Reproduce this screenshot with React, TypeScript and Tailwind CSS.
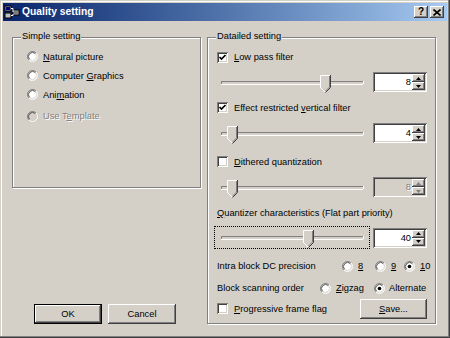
import React from "react"

const raised =
  "shadow-[inset_-1px_-1px_0_#404040,inset_1px_1px_0_#ffffff,inset_-2px_-2px_0_#808080]"
const sunken =
  "shadow-[inset_1px_1px_0_#808080,inset_-1px_-1px_0_#ffffff,inset_2px_2px_0_#404040,inset_-2px_-2px_0_#d4d0c8]"

function Radio({ checked = false, disabled = false }: { checked?: boolean; disabled?: boolean }) {
  return (
    <svg width="11" height="11" viewBox="0 0 12 12" className="shrink-0">
      <circle cx="6" cy="6" r="5" fill={disabled ? "#d4d0c8" : "#ffffff"} />
      <path d="M2.11 9.89 A5.5 5.5 0 0 1 9.89 2.11" stroke="#808080" fill="none" />
      <path d="M2.82 9.18 A4.5 4.5 0 0 1 9.18 2.82" stroke="#404040" fill="none" />
      <path d="M9.89 2.11 A5.5 5.5 0 0 1 2.11 9.89" stroke="#ffffff" fill="none" />
      <path d="M9.18 2.82 A4.5 4.5 0 0 1 2.82 9.18" stroke="#d4d0c8" fill="none" />
      {checked && <circle cx="6" cy="6" r="2" fill="#000000" />}
    </svg>
  )
}

function Check({ checked = false }: { checked?: boolean }) {
  return (
    <div className={`w-[11px] h-[11px] bg-white shrink-0 relative ${sunken}`}>
      {checked && (
        <svg width="11" height="11" viewBox="0 0 11 11" className="absolute inset-0">
          <path d="M2.5 5 L4.5 7 L8.5 3" stroke="#000000" strokeWidth="1.7" fill="none" />
        </svg>
      )}
    </div>
  )
}

function Slider({ thumb, focused = false }: { thumb: number; focused?: boolean }) {
  return (
    <div
      className={`relative w-[156px] h-[23px] shrink-0 border border-dotted ${
        focused ? "border-black" : "border-transparent"
      }`}
    >
      <div className="absolute left-[6px] right-[6px] top-[9px] h-[3px] bg-[#d4d0c8] border-t border-l border-[#808080] shadow-[0_1px_0_#ffffff,1px_0_0_#ffffff]" />
      <svg
        width="11"
        height="18"
        viewBox="0 0 11 18"
        className="absolute top-[3px]"
        style={{ left: thumb }}
      >
        <path d="M0.5 0.5 H10.5 V12.5 L5.5 17.5 L0.5 12.5 Z" fill="#d4d0c8" />
        <path d="M0.5 13 V0.5 H10" stroke="#ffffff" fill="none" />
        <path d="M0.5 12.5 L5 17" stroke="#ffffff" fill="none" />
        <path d="M10.5 0 V12.5 L5.5 17.5" stroke="#404040" fill="none" />
        <path d="M9.5 1 V12 L5.5 16" stroke="#808080" fill="none" />
      </svg>
    </div>
  )
}

function SpinArrow({ up, disabled }: { up: boolean; disabled: boolean }) {
  return (
    <div className={`flex-1 flex items-center justify-center bg-[#d4d0c8] ${raised}`}>
      <svg width="5" height="3" viewBox="0 0 5 3">
        <path
          d={up ? "M2.5 0 L5 3 L0 3 Z" : "M0 0 L5 0 L2.5 3 Z"}
          fill={disabled ? "#808080" : "#000000"}
        />
      </svg>
    </div>
  )
}

function Edit({ value, disabled = false }: { value: string; disabled?: boolean }) {
  return (
    <div
      className={`flex w-[54px] h-[20px] shrink-0 p-[2px] ml-[3px] ${sunken} ${
        disabled ? "bg-[#d4d0c8]" : "bg-white"
      }`}
    >
      <div
        className={`flex-1 flex items-center justify-end pr-[1px] ${
          disabled ? "text-[#808080] [text-shadow:1px_1px_0_#ffffff]" : "text-black"
        }`}
      >
        {value}
      </div>
      <div className="w-[13px] flex flex-col">
        <SpinArrow up disabled={disabled} />
        <SpinArrow up={false} disabled={disabled} />
      </div>
    </div>
  )
}

function Button({ children, isDefault = false, w }: { children: React.ReactNode; isDefault?: boolean; w: string }) {
  return (
    <div
      className={`${w} h-[20px] flex items-center justify-center bg-[#d4d0c8] ${
        isDefault ? "border border-black" : ""
      } ${raised}`}
    >
      {children}
    </div>
  )
}

function GroupLabel({ children }: { children: React.ReactNode }) {
  return (
    <span className="absolute top-[-8px] left-[8px] px-[1px] bg-[#d4d0c8] leading-[12px]">
      {children}
    </span>
  )
}

const etched = "border border-[#808080] shadow-[inset_1px_1px_0_#ffffff,1px_1px_0_#ffffff]"

export default function App() {
  return (
    <div className="w-[450px] h-[338px] bg-[#d4d0c8] p-[3px] flex flex-col font-['Liberation_Sans',Arial,sans-serif] text-[9.3px] leading-[12px] text-black shadow-[inset_-1px_-1px_0_#404040,inset_-2px_-2px_0_#808080,inset_1px_1px_0_#d4d0c8,inset_2px_2px_0_#ffffff]">
      {/* Title bar */}
      <div className="h-[18px] flex items-center bg-gradient-to-r from-[#0a246a] to-[#a6caf0] pl-[1px] pr-[3px]">
        <svg width="16" height="14" viewBox="0 0 16 14" className="shrink-0">
          <rect x="1" y="1" width="6" height="5" fill="#c0c0c0" stroke="#000000" strokeWidth="1" />
          <rect x="2" y="2" width="4" height="3" fill="#000080" />
          <rect x="1" y="8" width="6" height="5" fill="#c0c0c0" stroke="#000000" strokeWidth="1" />
          <rect x="9" y="5" width="6" height="5" fill="#c0c0c0" stroke="#000000" strokeWidth="1" />
          <rect x="10" y="6" width="4" height="3" fill="#808080" />
          <path d="M7 3.5 H9 V7" stroke="#ffffff" fill="none" />
          <path d="M7 10.5 H9 V9" stroke="#ffffff" fill="none" />
        </svg>
        <span className="ml-[2px] text-white font-bold text-[10.3px]">Quality setting</span>
        <div className="ml-auto flex gap-[2px]">
          <div className={`w-[14px] h-[12px] bg-[#d4d0c8] flex items-center justify-center font-bold text-[10px] leading-none ${raised}`}>
            ?
          </div>
          <div className={`w-[14px] h-[12px] bg-[#d4d0c8] flex items-center justify-center ${raised}`}>
            <svg width="8" height="7" viewBox="0 0 8 7">
              <path d="M0.5 0.5 L7.5 6.5 M7.5 0.5 L0.5 6.5" stroke="#000000" strokeWidth="1.6" />
            </svg>
          </div>
        </div>
      </div>

      {/* Body */}
      <div className="flex-1 flex pl-[9px] pr-[11px] pt-[16px] pb-[11px] gap-[6px]">
        {/* Left column */}
        <div className="w-[189px] flex flex-col justify-between">
          <div className={`relative w-[189px] h-[151px] pt-[9px] pl-[14px] ${etched}`}>
            <GroupLabel>Simple setting</GroupLabel>
            <div className="h-[19px] flex items-center gap-[5px]">
              <Radio />
              <span>
                <span className="underline">N</span>atural picture
              </span>
            </div>
            <div className="h-[19px] flex items-center gap-[5px]">
              <Radio />
              <span>
                Computer <span className="underline">G</span>raphics
              </span>
            </div>
            <div className="h-[19px] flex items-center gap-[5px]">
              <Radio />
              <span>
                Ani<span className="underline">m</span>ation
              </span>
            </div>
            <div className="h-[24px] flex items-center gap-[5px]">
              <Radio disabled />
              <span className="text-[#808080] [text-shadow:1px_1px_0_#ffffff]">
                Use T<span className="underline">e</span>mplate
              </span>
            </div>
          </div>
          <div className="flex gap-[6px] pl-[22px]">
            <Button w="w-[68px]" isDefault>
              OK
            </Button>
            <Button w="w-[68px]">Cancel</Button>
          </div>
        </div>

        {/* Right group */}
        <div className={`relative w-[229px] h-[287px] flex flex-col pt-[7px] ${etched}`}>
          <GroupLabel>Datailed setting</GroupLabel>
          <div className="h-[24px] flex items-center pl-[9px] gap-[6px]">
            <Check checked />
            <span>
              <span className="underline">L</span>ow pass filter
            </span>
          </div>
          <div className="h-[26px] flex items-center pl-[6px]">
            <Slider thumb={105} />
            <Edit value="8" />
          </div>
          <div className="h-[25px] flex items-center pl-[9px] gap-[6px]">
            <Check checked />
            <span>
              Effect restricted <span className="underline">v</span>ertical filter
            </span>
          </div>
          <div className="h-[26px] flex items-center pl-[6px]">
            <Slider thumb={12} />
            <Edit value="4" />
          </div>
          <div className="h-[31px] flex items-center pl-[9px] gap-[6px]">
            <Check />
            <span>
              <span className="underline">D</span>ithered quantization
            </span>
          </div>
          <div className="h-[20px] flex items-center pl-[6px]">
            <Slider thumb={12} />
            <Edit value="8" disabled />
          </div>
          <div className="mt-[6px] h-[20px] flex items-center pl-[9px]">
            <span>
              <span className="underline">Q</span>uantizer characteristics (Flat part priority)
            </span>
          </div>
          <div className="h-[29px] flex items-center pl-[6px]">
            <Slider thumb={88} focused />
            <Edit value="40" />
          </div>
          <div className="h-[28px] flex items-center pl-[9px]">
            <span className="w-[125px] shrink-0">Intra block DC precision</span>
            <div className="w-[33px] flex items-center gap-[5px]">
              <Radio />
              <span className="underline">8</span>
            </div>
            <div className="w-[29px] flex items-center gap-[5px]">
              <Radio />
              <span className="underline">9</span>
            </div>
            <div className="flex items-center gap-[5px]">
              <Radio checked />
              <span>
                <span className="underline">1</span>0
              </span>
            </div>
          </div>
          <div className="h-[16px] flex items-center pl-[9px]">
            <span className="w-[103px] shrink-0">Block scanning order</span>
            <div className="w-[54px] flex items-center gap-[5px]">
              <Radio />
              <span>
                <span className="underline">Z</span>igzag
              </span>
            </div>
            <div className="flex items-center gap-[4px]">
              <Radio checked />
              <span>Alternate</span>
            </div>
          </div>
          <div className="h-[25px] flex items-center pl-[9px] pr-[8px]">
            <Check />
            <span className="ml-[6px]">
              <span className="underline">P</span>rogressive frame flag
            </span>
            <div className="ml-auto">
              <Button w="w-[67px]">
                <span>
                  <span className="underline">S</span>ave...
                </span>
              </Button>
            </div>
          </div>
        </div>
      </div>
    </div>
  )
}
